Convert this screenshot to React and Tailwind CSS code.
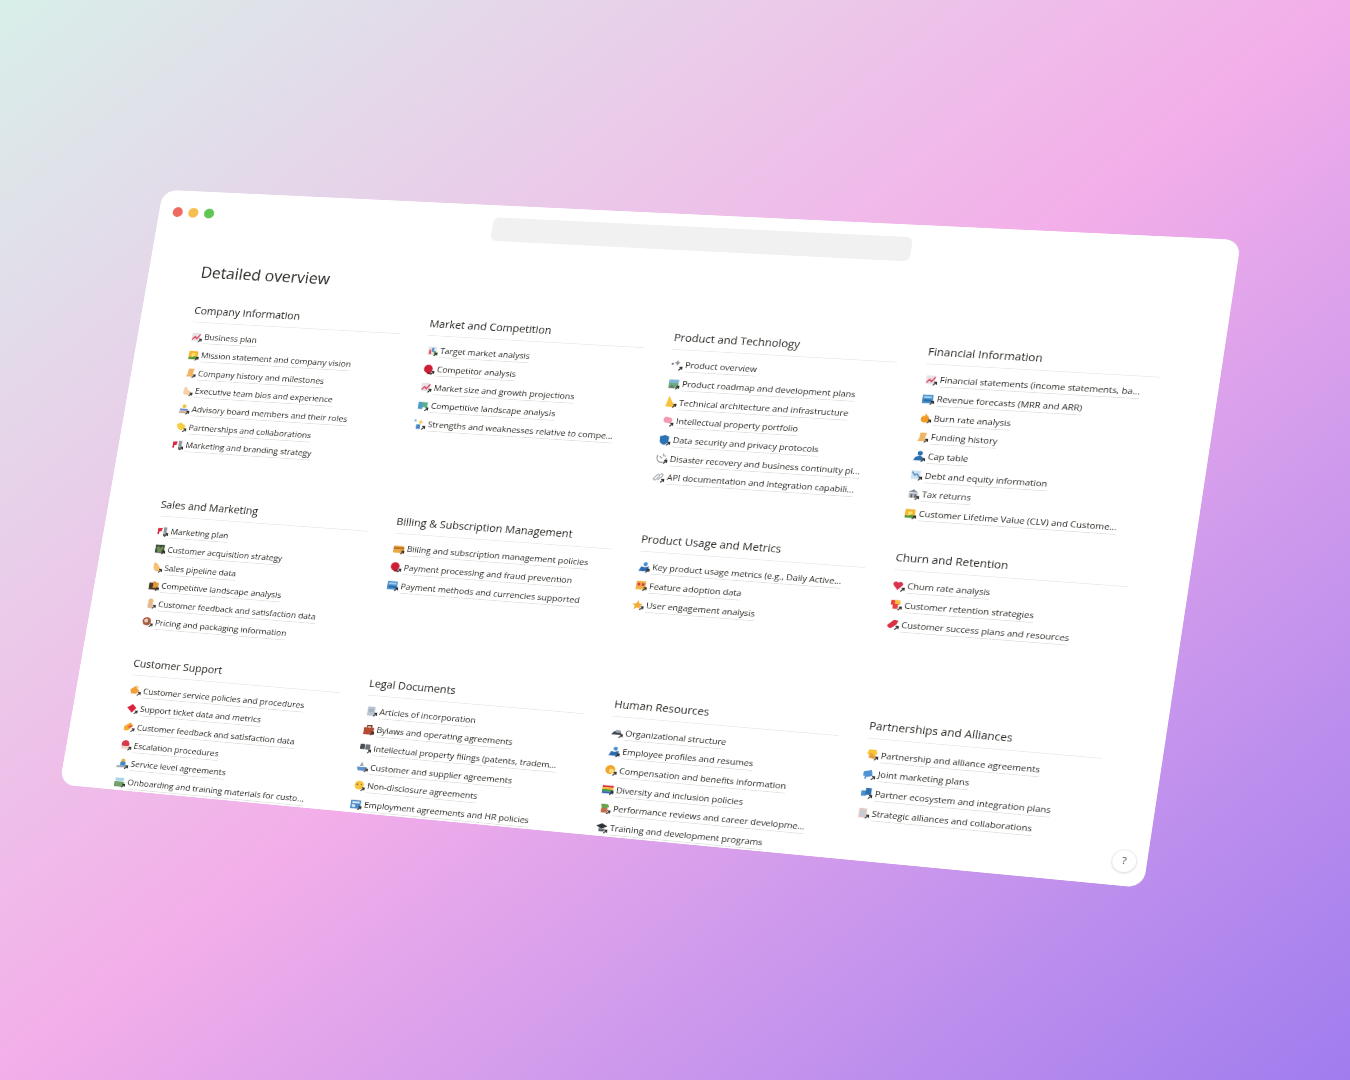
import React from "react";

const W = 1400;
const H = 850;
const SCREEN_W = 1350;
const SCREEN_H = 1080;

function perspectiveMatrix() {
  const ox = (SCREEN_W - W) / 2;
  const oy = (SCREEN_H - H) / 2;
  const [x0, y0] = [163 - ox, 189.7 - oy];
  const [x1, y1] = [1241.2 - ox, 239.9 - oy];
  const [x2, y2] = [1143.3 - ox, 888 - oy];
  const [x3, y3] = [59.6 - ox, 784.4 - oy];
  const dx1 = x1 - x2, dx2 = x3 - x2, sx = x0 - x1 + x2 - x3;
  const dy1 = y1 - y2, dy2 = y3 - y2, sy = y0 - y1 + y2 - y3;
  const den = dx1 * dy2 - dx2 * dy1;
  const g = (sx * dy2 - dx2 * sy) / den;
  const h = (dx1 * sy - sx * dy1) / den;
  const a = x1 - x0 + g * x1, b = x3 - x0 + h * x3, c = x0;
  const d = y1 - y0 + g * y1, e = y3 - y0 + h * y3, f = y0;
  return `matrix3d(${a / W},${d / W},0,${g / W},${b / H},${e / H},0,${h / H},0,0,1,0,${c},${f},0,1)`;
}

const glyphs = {
  chart: <><rect x="2" y="2" width="13" height="13" rx="1" fill="#e6e3e6" /><path d="M3 13l4-5 3 3 5-7" stroke="#e0405e" strokeWidth="2" fill="none" /></>,
  sunrise: <><rect x="2" y="2" width="14" height="13" rx="1" fill="#f4b733" /><circle cx="9" cy="8" r="3" fill="#fbe26b" /><path d="M2 15v-4l5 1 4-2 5 2v3z" fill="#4e9a3d" /></>,
  scroll: <path d="M6 2h9l-2 10 2 3H3l2-4z" fill="#efb565" />,
  arm: <path d="M4 3c3-2 5 0 5 3l5 3c2 2 1 6-2 6H7C4 15 2 11 4 8z" fill="#f5cfa6" />,
  people: <><circle cx="9" cy="4" r="3" fill="#f2c23f" /><rect x="3" y="8" width="12" height="3" fill="#6a86c9" /><rect x="2" y="12" width="14" height="3" fill="#c9a68c" /></>,
  handshake: <path d="M2 5l6-3 8 5-2 5-5 3-5-4z" fill="#f7cd46" />,
  flags: <><path d="M1 4l7-1-1 6H4l-1 5-2-1z" fill="#d92b45" /><path d="M10 2h5v9h-5z" fill="#8f9aa3" /><path d="M10 12h4v4h-4z" fill="#666" /></>,
  target: <><rect x="3" y="2" width="13" height="13" fill="#e4e6e8" /><rect x="5" y="7" width="3" height="7" fill="#d94a5b" /><rect x="9" y="4" width="3" height="6" fill="#4a89c8" /><rect x="12" y="9" width="3" height="5" fill="#57a64a" /></>,
  glove: <><circle cx="8" cy="8" r="6.5" fill="#cc1f35" /><rect x="7" y="13" width="6" height="3" fill="#8f1c2a" /></>,
  map: <><rect x="2" y="3" width="7" height="11" fill="#4d9ccc" /><rect x="8" y="3" width="8" height="8" fill="#5ab08a" /></>,
  sparkle: <><path d="M2 1v4M0 3h4" stroke="#7db2d8" strokeWidth="1.4" /><path d="M10 1l1.5 3 3 1-3 1.5L10 10 8.5 6.5 6 5l3-1z" fill="#f2cc50" /><rect x="4" y="9" width="6" height="7" fill="#4a89c8" /></>,
  dots: <><circle cx="3" cy="7" r="1.6" fill="#6a7280" /><path d="M10 1l1.5 3 3 1.2-3 1.3L10 10 8.5 6.500 5.500 5.200l3-1.200z" fill="#8a9099" /></>,
  roadmap: <><rect x="2" y="2" width="14" height="13" fill="#6cab7c" /><rect x="2" y="2" width="14" height="5" fill="#7fb6dd" /><path d="M2 15l5-5 4 5z" fill="#6b6f78" /></>,
  triangle: <path d="M6 1l9 14H3z" fill="#f7c33c" stroke="#f7c33c" strokeWidth="1.500" />,
  brain: <path d="M3 6c0-4 5-5 7-3 4-1 7 2 5 6-1 4-5 3-6 2-3 1-7-1-6-5z" fill="#f29bb0" />,
  shield: <path d="M2 3l7-2 6 2v6c0 4-3 6-6 7-4-1-7-3-7-7z" fill="#2c72b5" />,
  recovery: <path d="M3 4c-2 5 0 10 5 11s8-3 8-7M11 1v4h4M6 6l4 3" stroke="#8c9096" strokeWidth="1.400" fill="none" />,
  link: <path d="M2 11l5-6c2-2 4 0 3 2l-5 6c-1 1-3 0-3-2zM8 13l6-6c2-2 0-5-3-3" stroke="#9ba0a6" strokeWidth="1.500" fill="none" />,
  doc: <><rect x="3" y="2" width="11" height="14" rx="1" fill="#b9c2d0" /><path d="M5 6h7M5 9h7" stroke="#8f9ab0" /></>,
  card: <><rect x="1" y="4" width="16" height="11" rx="1.500" fill="#e9a942" /><rect x="1" y="6" width="16" height="3" fill="#b8722e" /></>,
  bank: <><rect x="1" y="2" width="15" height="13" rx="1" fill="#4a92cf" /><rect x="3" y="4" width="11" height="3" fill="#a4d0ee" /><rect x="3" y="9" width="11" height="3" fill="#2b6da9" /></>,
  fire: <path d="M9 1c1 4 6 5 6 10a6 5 0 0 1-12 0c0-3 2-3 3-6 1 1 1 2 2 2 1-2 1-4 1-6z" fill="#f19a25" />,
  bust: <><circle cx="10" cy="4" r="3.500" fill="#2c6fb0" /><path d="M2 15c0-5 4-7 8-7s5 3 5 7z" fill="#2c6fb0" /></>,
  debt: <><rect x="2" y="2" width="13" height="13" fill="#cfe3f2" /><path d="M3 4l4 5 3-2 5 7" stroke="#5a8fc0" strokeWidth="2" fill="none" /></>,
  temple: <><path d="M9 1l7 5H2z" fill="#828b96" /><rect x="3" y="7" width="12" height="7" fill="#b1b8c1" /><rect x="6" y="8" width="2" height="6" fill="#555d68" /><rect x="11" y="8" width="2" height="6" fill="#555d68" /></>,
  handshake2: <><path d="M4 1h10l2 6-7 7-7-7z" fill="#f9c436" /><path d="M4 13l3-7 8 6-3 3z" fill="#e5a040" /></>,
  bear: <><rect x="2" y="2" width="14" height="13" fill="#3e4f38" /><path d="M3 7l4-3 2 3 4-3 2 4-3 2 1 4H6l-1-4z" fill="#6e8d5b" /></>,
  folder: <><rect x="2" y="4" width="14" height="11" fill="#4f3b2b" /><path d="M8 1l8 3v8H8z" fill="#e29a33" /></>,
  hand: <path d="M4 2c2-1 5 0 7 3l3 4c2 3 0 6-3 6-4 1-6-3-7-6z" fill="#f5c06f" />,
  thumb: <><circle cx="9" cy="5" r="4" fill="#efb87c" /><rect x="5" y="8" width="8" height="8" rx="2" fill="#e0b89a" /></>,
  tag: <><circle cx="8" cy="8" r="6.500" fill="#a85a3f" /><circle cx="7" cy="7" r="3" fill="#e8d2c2" /></>,
  warm: <><path d="M1 8l7-6 7 7-4 5H3z" fill="#f19f38" /><path d="M8 2l3-1 3 5z" fill="#e2c04e" /></>,
  ticket: <path d="M1 7l8-6 6 6-6 8z" fill="#d8233f" />,
  feedback: <><path d="M1 9l9-7 5 5-7 8H2z" fill="#f5a92e" /><path d="M7 9l5-3 2 2-5 3z" fill="#e24a5a" /></>,
  siren: <><circle cx="8" cy="7" r="6" fill="#d73a4a" /><rect x="2" y="10" width="13" height="5" rx="2" fill="#ecd7cf" /></>,
  sla: <><circle cx="9" cy="4" r="3" fill="#e7a83c" /><rect x="5" y="6" width="8" height="6" fill="#3f86c8" /><path d="M0 12h17v3H0z" fill="#9aa7b3" /></>,
  onboard: <><rect x="2" y="2" width="13" height="5" fill="#a9d4e8" /><path d="M1 8h15l-2 8H1z" fill="#73a269" /></>,
  briefcase: <><rect x="2" y="5" width="15" height="11" rx="1" fill="#b64b34" /><path d="M7 5V2h6v3" stroke="#7a3122" strokeWidth="2" fill="none" /></>,
  tm: <><rect x="1" y="3" width="7" height="8" fill="#4a4d55" /><rect x="9" y="3" width="7" height="8" fill="#6b6f78" /></>,
  ship: <><path d="M8 1l3 7H5z" fill="#9aa6b5" /><path d="M1 9h15l-3 6H3z" fill="#5f93c5" /></>,
  face: <><circle cx="9" cy="8" r="7" fill="#f8c63d" /><circle cx="6" cy="7" r="1" fill="#555" /><circle cx="12" cy="7" r="1" fill="#555" /></>,
  resume: <><rect x="1" y="2" width="15" height="13" fill="#4b8bc6" /><rect x="3" y="4" width="11" height="3" fill="#dceaf6" /><rect x="3" y="9" width="5" height="4" fill="#dceaf6" /></>,
  org: <><path d="M1 12l4-5h9l2 5z" fill="#3e4450" /><rect x="7" y="5" width="7" height="4" fill="#9aa1ab" /></>,
  coin: <><circle cx="8" cy="8" r="7" fill="#f2a52d" /><circle cx="10" cy="10" r="3.500" fill="#f9dd7a" /></>,
  rainbow: <><rect x="1" y="3" width="16" height="3" fill="#d8323e" /><rect x="1" y="6" width="16" height="3" fill="#f5b92e" /><rect x="1" y="9" width="16" height="3" fill="#3e9d4a" /><rect x="1" y="12" width="16" height="3" fill="#3c62c0" /></>,
  plant: <><path d="M3 2h10l2 4-5 3H5z" fill="#68a34a" /><rect x="4" y="8" width="9" height="7" fill="#c26a4a" /></>,
  grad: <><path d="M1 6l8-4 8 4-8 4z" fill="#2e3238" /><path d="M5 9v5h8V9l-4 2z" fill="#585e66" /></>,
  strat: <><rect x="3" y="2" width="11" height="14" fill="#e8c8c0" /><rect x="5" y="4" width="7" height="10" fill="#c3cbd4" /></>,
  tshirt: <><path d="M2 2h11l2 6-3 1v6H5V9H2z" fill="#e9403e" /><path d="M7 2h8v6H8z" fill="#f3bf3b" /></>,
  heart: <path d="M8 15L2 8c-3-4 3-8 6-4 3-4 9 0 6 4z" fill="#d8324c" />,
  rocket: <path d="M1 11l9-9 6 1-2 6-7 6-3-1z" fill="#d93044" />,
  star: <path d="M9 2l2 5 5 1-4 3 1 5-4-3-5 3 1-5-4-3 6-1z" fill="#f4a935" />,
  hearts: <><rect x="2" y="2" width="14" height="13" fill="#f0b34a" /><path d="M4 5h4v4H4zM10 5h4v4h-4z" fill="#d9384c" /></>,
  mega: <path d="M1 5l11-3 2 9-8 2-1 3-2-1 1-3-3-1z" fill="#4e92d3" />,
  puzzle: <><rect x="2" y="5" width="7" height="8" fill="#4a92cf" /><rect x="8" y="1" width="8" height="10" fill="#2e6fae" /></>,
  usage: <><circle cx="11" cy="4" r="3" fill="#4a8ed0" /><path d="M2 15l3-7 5 1 6-2v8z" fill="#2f6cae" /></>,
};

function Icon({ name }) {
  return (
    <svg viewBox="0 0 20 18" className="w-[18px] h-[16px] shrink-0 mr-[1px]">
      {glyphs[name]}
      <path d="M12.500 16.500L17 12M13.500 11.800H17.200V15.500" stroke="#2f2d28" strokeWidth="1.500" fill="none" />
    </svg>
  );
}

const sections = [
  ["Company Information", [
    ["Business plan", "chart"], ["Mission statement and company vision", "sunrise"], ["Company history and milestones", "scroll"],
    ["Executive team bios and experience", "arm"], ["Advisory board members and their roles", "people"], ["Partnerships and collaborations", "handshake"],
    ["Marketing and branding strategy", "flags"]]],
  ["Market and Competition", [
    ["Target market analysis", "target"], ["Competitor analysis", "glove"], ["Market size and growth projections", "chart"],
    ["Competitive landscape analysis", "map"], ["Strengths and weaknesses relative to compe...", "sparkle"]]],
  ["Product and Technology", [
    ["Product overview", "dots"], ["Product roadmap and development plans", "roadmap"], ["Technical architecture and infrastructure", "triangle"],
    ["Intellectual property portfolio", "brain"], ["Data security and privacy protocols", "shield"], ["Disaster recovery and business continuity pl...", "recovery"],
    ["API documentation and integration capabili...", "link"]]],
  ["Financial Information", [
    ["Financial statements (income statements, ba...", "chart"], ["Revenue forecasts (MRR and ARR)", "bank"], ["Burn rate analysis", "fire"],
    ["Funding history", "scroll"], ["Cap table", "bust"], ["Debt and equity information", "debt"], ["Tax returns", "temple"],
    ["Customer Lifetime Value (CLV) and Custome...", "sunrise"]]],
  ["Sales and Marketing", [
    ["Marketing plan", "flags"], ["Customer acquisition strategy", "bear"], ["Sales pipeline data", "hand"],
    ["Competitive landscape analysis", "folder"], ["Customer feedback and satisfaction data", "thumb"], ["Pricing and packaging information", "tag"]]],
  ["Billing & Subscription Management", [
    ["Billing and subscription management policies", "card"], ["Payment processing and fraud prevention", "glove"], ["Payment methods and currencies supported", "bank"]]],
  ["Product Usage and Metrics", [
    ["Key product usage metrics (e.g., Daily Active...", "usage"], ["Feature adoption data", "hearts"], ["User engagement analysis", "star"]]],
  ["Churn and Retention", [
    ["Churn rate analysis", "heart"], ["Customer retention strategies", "tshirt"], ["Customer success plans and resources", "rocket"]]],
  ["Customer Support", [
    ["Customer service policies and procedures", "warm"], ["Support ticket data and metrics", "ticket"], ["Customer feedback and satisfaction data", "feedback"],
    ["Escalation procedures", "siren"], ["Service level agreements", "sla"], ["Onboarding and training materials for custo...", "onboard"]]],
  ["Legal Documents", [
    ["Articles of incorporation", "doc"], ["Bylaws and operating agreements", "briefcase"], ["Intellectual property filings (patents, tradem...", "tm"],
    ["Customer and supplier agreements", "ship"], ["Non-disclosure agreements", "face"], ["Employment agreements and HR policies", "resume"]]],
  ["Human Resources", [
    ["Organizational structure", "org"], ["Employee profiles and resumes", "usage"], ["Compensation and benefits information", "coin"],
    ["Diversity and inclusion policies", "rainbow"], ["Performance reviews and career developme...", "plant"], ["Training and development programs", "grad"]]],
  ["Partnerships and Alliances", [
    ["Partnership and alliance agreements", "handshake2"], ["Joint marketing plans", "mega"], ["Partner ecosystem and integration plans", "puzzle"],
    ["Strategic alliances and collaborations", "strat"]]],
];

function Section({ title, items }) {
  return (
    <div className="min-w-0">
      <h2 className="text-[14.3px] leading-[20px] font-medium text-[#2b2a25] pb-[6px] border-b border-[#37352f]/10 mb-[8px]">{title}</h2>
      {items.map(([text, icon]) => (
        <div key={text} className="flex items-center h-[25.7px] pl-[1px]">
          <Icon name={icon} />
          <span className="text-[11.5px] tracking-[-0.06px] leading-[18px] font-medium text-[#2b2a25] border-b border-[#37352f]/15 whitespace-nowrap">{text}</span>
        </div>
      ))}
    </div>
  );
}

export default function App() {
  return (
    <div
      className="w-full h-[1080px] overflow-hidden flex items-center justify-center bg-linear-to-br from-[#d8efe9] via-[#f3aee9] to-[#a07cee]"
      style={{ fontFamily: '"Open Sans", "Noto Sans", sans-serif' }}
    >
      <div
        className="relative w-[1400px] h-[850px] shrink-0 bg-white rounded-[20px] overflow-hidden origin-top-left blur-[0.3px]"
        style={{ transform: perspectiveMatrix() }}
      >
        <div className="flex items-start pl-[19px] pt-[17px]">
          <div className="flex gap-[8px] pt-[7px]">
            <span className="w-[14px] h-[14px] rounded-full bg-[#ed6a5e]" />
            <span className="w-[14px] h-[14px] rounded-full bg-[#f4bf4f]" />
            <span className="w-[14px] h-[14px] rounded-full bg-[#61c554]" />
          </div>
          <div className="ml-[381px] w-[543px] h-[33px] rounded-[8px] bg-[#f1f1f1]" />
        </div>
        <h1 className="mt-[51px] ml-[73px] text-[21.5px] leading-[28px] font-medium text-[#2b2a25]">Detailed overview</h1>
        <div className="mt-[31px] pl-[73px] grid grid-cols-[repeat(4,287px)] gap-x-[36px] gap-y-[36.3px] items-start">
          {sections.map(([title, items]) => (
            <Section key={title} title={title} items={items} />
          ))}
        </div>
        <div className="absolute right-[12px] bottom-[17px] w-[30px] h-[30px] rounded-full bg-white border border-[#37352f]/10 shadow-sm flex items-center justify-center text-[13px] text-[#55534e]">?</div>
      </div>
    </div>
  );
}
